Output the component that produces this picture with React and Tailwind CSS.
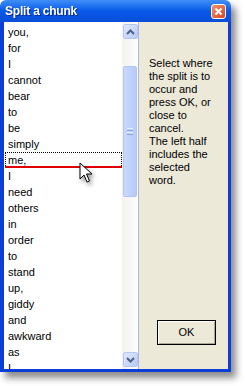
import React from 'react';

const words = ['you,', 'for', 'I', 'cannot', 'bear', 'to', 'be', 'simply', 'me,', 'I', 'need', 'others', 'in', 'order', 'to', 'stand', 'up,', 'giddy', 'and', 'awkward', 'as', 'I'];

const font = { fontFamily: '"Liberation Sans", Arial, sans-serif' };

function ArrowBtn({ up }) {
  return (
    <div className="w-[15px] h-[15px] rounded-[2px] border border-[#b4c8f6] bg-gradient-to-br from-[#dfe8fd] to-[#b9cbf7] flex items-center justify-center">
      <svg width="9" height="6" viewBox="0 0 9 6">
        <path d={up ? 'M1 5 L4.5 1.5 L8 5' : 'M1 1 L4.5 4.5 L8 1'} fill="none" stroke="#4d6185" strokeWidth="2" />
      </svg>
    </div>
  );
}

export default function App() {
  return (
    <div className="w-[245px] h-[386px] bg-white relative overflow-hidden" style={font}>
      <div className="w-[231px] h-[372px] flex flex-col shadow-[5px_6px_7px_rgba(0,0,0,0.45)] rounded-t-[6px] overflow-hidden">
        {/* Title bar */}
        <div className="h-[22px] flex items-center justify-between pl-[5px] pr-[5px] bg-gradient-to-b from-[#3f8ff8] via-[#0859ea] to-[#0a4ed8]">
          <span className="text-white font-bold text-[12px] tracking-[-0.2px] drop-shadow-[1px_1px_0_rgba(0,0,60,0.5)]">Split a chunk</span>
          <div className="w-[15px] h-[15px] rounded-[3px] border border-white bg-gradient-to-br from-[#f0906a] to-[#d9431c] flex items-center justify-center">
            <svg width="9" height="9" viewBox="0 0 9 9">
              <path d="M1.5 1.5 L7.5 7.5 M7.5 1.5 L1.5 7.5" stroke="white" strokeWidth="2" />
            </svg>
          </div>
        </div>

        {/* Body */}
        <div className="flex-1 flex border-l-4 border-r-[3px] border-b-[3px] border-[#0a3ed6] min-h-0">
          {/* List box */}
          <div className="w-[135px] flex bg-white border-r border-[#a6b9d8] relative">
            <div className="flex-1 overflow-hidden pt-[2px] text-[11px] text-black">
              {words.map((w, i) =>
                i === 8 ? (
                  <div key={i} className="relative h-[16px] leading-[14px] pl-[2px] ml-[1px] border border-dotted border-black">
                    {w}
                    <div className="absolute left-[-1px] right-[-1px] bottom-[-1px] h-[2px] bg-[#e00000]" />
                  </div>
                ) : (
                  <div key={i} className="h-[16px] leading-[16px] pl-[3px] ml-[1px]">
                    {w}
                  </div>
                )
              )}
            </div>
            {/* Scrollbar */}
            <div className="w-[16px] flex flex-col items-center bg-gradient-to-r from-[#f3f2ee] to-[#fdfdfb] py-[2px]">
              <ArrowBtn up />
              <div className="flex-1 w-full flex flex-col items-center">
                <div className="h-[27px]" />
                <div className="w-[14px] h-[131px] rounded-[2px] border border-[#b1c5f5] bg-gradient-to-r from-[#c9d8fc] to-[#b7cbf9] flex flex-col items-center justify-center gap-[1px]">
                  <div className="w-[6px] h-[1px] bg-[#e8eefd]" />
                  <div className="w-[6px] h-[1px] bg-[#8ba6e4]" />
                  <div className="w-[6px] h-[1px] bg-[#e8eefd]" />
                  <div className="w-[6px] h-[1px] bg-[#8ba6e4]" />
                </div>
              </div>
              <ArrowBtn />
            </div>
            {/* Cursor */}
            <svg className="absolute left-[75px] top-[140px] drop-shadow-[2px_3px_2px_rgba(0,0,0,0.4)]" width="16" height="24" viewBox="0 0 16 24">
              <path d="M1 1 L1 17 L5 13 L8 20 L10.5 19 L7.5 12 L13 12 Z" fill="white" stroke="black" strokeWidth="1" strokeLinejoin="miter" />
            </svg>
          </div>

          {/* Right panel */}
          <div className="flex-1 bg-[#ece9d8] flex flex-col pl-[10px] pt-[35px] pb-[24px]">
            <div className="text-[11px] leading-[13px] text-black">
              <div>Select where</div>
              <div>the split is to</div>
              <div>occur and</div>
              <div>press OK, or</div>
              <div>close to</div>
              <div>cancel.</div>
              <div>The left half</div>
              <div>includes the</div>
              <div>selected</div>
              <div>word.</div>
            </div>
            <div className="flex-1" />
            <div className="ml-[8px] w-[59px] h-[25px] border border-black bg-[#ece9d8] shadow-[inset_1px_1px_0_#fff,inset_-1px_-1px_0_#aca899] flex items-center justify-center text-[11px] text-black">
              OK
            </div>
          </div>
        </div>
      </div>
    </div>
  );
}
